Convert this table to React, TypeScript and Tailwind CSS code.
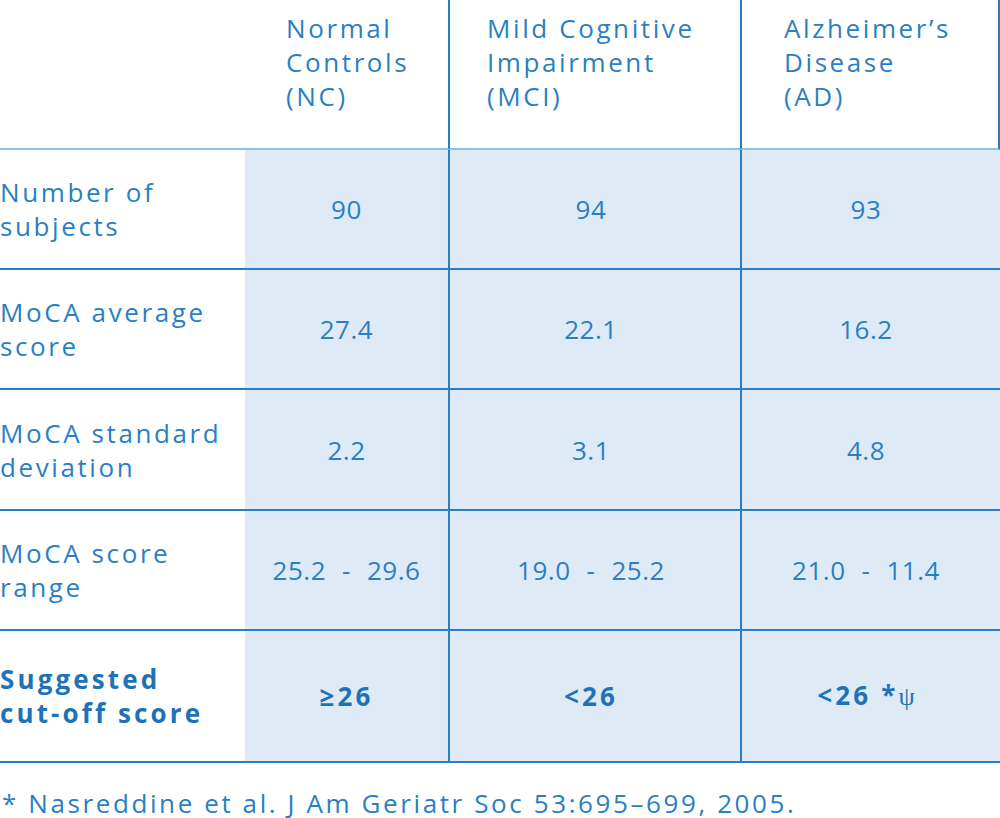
import React from "react";

const range = (a: string, b: string) => (
  <span>
    {a}
    <span className="px-[16px]">-</span>
    {b}
  </span>
);

const rows: { label: string[]; vals: React.ReactNode[]; bold?: boolean }[] = [
  { label: ["Number of", "subjects"], vals: ["90", "94", "93"] },
  { label: ["MoCA average", "score"], vals: ["27.4", "22.1", "16.2"] },
  { label: ["MoCA standard", "deviation"], vals: ["2.2", "3.1", "4.8"] },
  { label: ["MoCA score", "range"], vals: [range("25.2", "29.6"), range("19.0", "25.2"), range("21.0", "11.4")] },
  {
    label: ["Suggested", "cut-off score"],
    vals: [
      "≥26",
      "<26",
      <span key="ad">
        &lt;26 *<span className="font-normal font-['Liberation_Serif',serif] text-[26px] tracking-normal">ψ</span>
      </span>,
    ],
    bold: true,
  },
];

export default function App() {
  return (
    <div className="w-[1000px] h-[818px] bg-white text-[#2a7fc3] font-['Open_Sans',sans-serif] text-[26px] leading-[34px] tracking-[0.1em] overflow-hidden">
      <div className="grid grid-cols-[245px_203px_292px_260px]">
        {/* header */}
        <div className="h-[150px] border-b-2 border-[#8fc0e6]" />
        <div className="h-[150px] border-b-2 border-[#8fc0e6] pl-[41px] pt-[11px]">
          <div>Normal</div>
          <div>Controls</div>
          <div>(NC)</div>
        </div>
        <div className="h-[150px] border-b-2 border-[#8fc0e6] border-l-2 border-l-[#2a7fc3] pl-[37px] pt-[11px]">
          <div>Mild Cognitive</div>
          <div>Impairment</div>
          <div>(MCI)</div>
        </div>
        <div className="h-[150px] border-b-2 border-[#8fc0e6] border-l-2 border-l-[#2a7fc3] border-r-2 border-r-[#2a7fc3] pl-[42px] pt-[11px]">
          <div>Alzheimer’s</div>
          <div>Disease</div>
          <div>(AD)</div>
        </div>
        {rows.map((r, i) => {
          const h = i === rows.length - 1 ? "h-[132px]" : i === 2 ? "h-[121px]" : "h-[120px]";
          const weight = r.bold ? "font-bold text-[#1e72b8] tracking-[0.12em]" : "";
          return (
            <React.Fragment key={i}>
              <div className={`${h} border-b-2 border-[#2a7fc3] flex flex-col justify-center ${weight}`}>
                {r.label.map((l) => (
                  <div key={l}>{l}</div>
                ))}
              </div>
              {r.vals.map((v, j) => (
                <div
                  key={j}
                  className={`${h} border-b-2 border-[#2a7fc3] bg-[#deebf6] flex items-center justify-center tracking-[0.02em] ${
                    j > 0 ? "border-l-2 border-l-[#2a7fc3]" : ""
                  } ${j === 2 ? "pr-[10px]" : ""} ${j === 1 ? "pr-[8px]" : ""} ${weight}`}
                >
                  {v}
                </div>
              ))}
            </React.Fragment>
          );
        })}
      </div>
      <div className="mt-[23px] pl-[2px]">* Nasreddine et al. J Am Geriatr Soc 53:695–699, 2005.</div>
    </div>
  );
}
